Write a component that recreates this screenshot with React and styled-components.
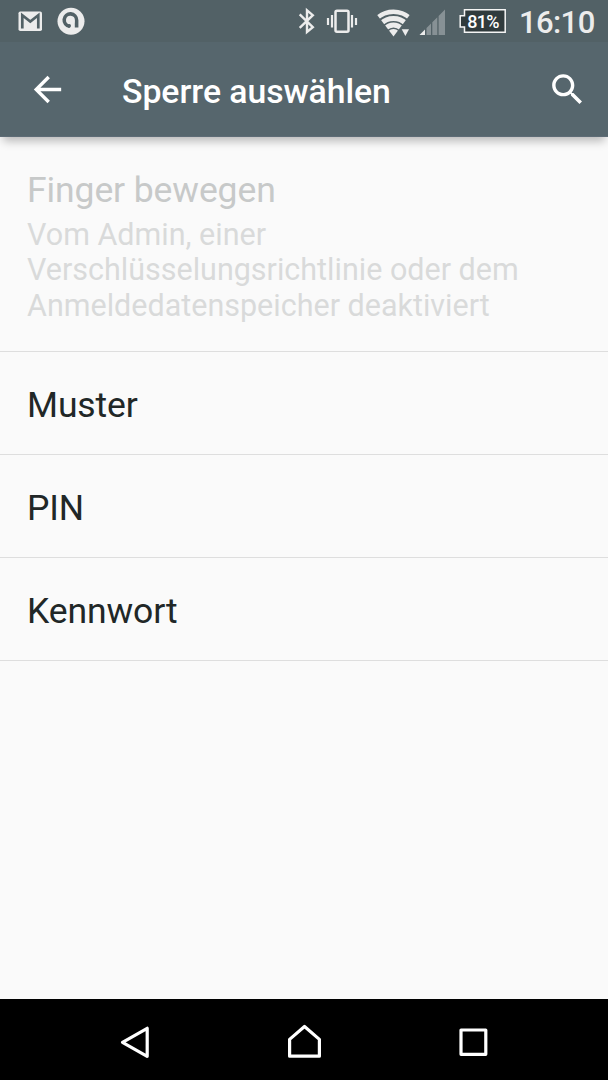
import React from 'react';
import styled, { createGlobalStyle } from 'styled-components';

const GlobalStyle = createGlobalStyle`
  * { box-sizing: border-box; }
  body { margin: 0; background: #fafafa; font-family: Roboto, sans-serif; }
`;

const Screen = styled.div`
  display: flex;
  flex-direction: column;
  width: 608px;
  height: 1080px;
  background: #fafafa;
  overflow: hidden;
`;

const StatusBar = styled.div`
  display: flex;
  flex: none;
  align-items: flex-start;
  justify-content: space-between;
  height: 42px;
  padding: 0 13px 0 18px;
  background: #526166;
`;

const IconGroup = styled.div`
  display: flex;
  align-items: flex-start;
`;

const StatusIcon = styled.svg`
  display: block;
  flex: none;
  height: 44px;
  margin-left: ${(p) => p.$gap || 0}px;
`;

const Battery = styled.div`
  position: relative;
  width: 47px;
  height: 44px;
  margin-left: 14px;
`;

const BatteryLevel = styled.span`
  position: absolute;
  left: 2px;
  top: 9px;
  width: 44px;
  text-align: center;
  font-size: 18px;
  font-weight: 500;
  line-height: 25px;
  letter-spacing: -0.7px;
  color: #fff;
`;

const Clock = styled.span`
  width: 76px;
  margin-left: 13px;
  padding-top: 1px;
  font-size: 31px;
  font-weight: 500;
  line-height: 44px;
  letter-spacing: -0.6px;
  color: #ececec;
  white-space: nowrap;
`;

const Toolbar = styled.header`
  display: flex;
  flex: none;
  align-items: center;
  height: 95px;
  padding: 2px 20px 0 27px;
  background: #56666d;
  border-bottom: 1px solid #5e6c76;
  box-shadow: 0 7px 9px -3px rgba(0, 0, 0, 0.27);
  z-index: 1;
`;

const IconButton = styled.button`
  display: flex;
  padding: 0;
  margin-bottom: 2px;
  border: 0;
  background: none;
  color: #fff;
`;

const Title = styled.h1`
  flex: 1;
  margin: 4px 0 0 54px;
  font-size: 33.8px;
  font-weight: 500;
  line-height: 44px;
  letter-spacing: -0.05px;
  color: #fff;
  white-space: nowrap;
`;

const List = styled.main`
  flex: 1;
`;

const Row = styled.div`
  display: flex;
  flex-direction: column;
  justify-content: center;
  height: ${(p) => p.$height || 103}px;
  padding: ${(p) => (p.$height ? 2 : 4)}px 27px 0;
  border-bottom: 1px solid #dedede;
`;

const RowTitle = styled.div`
  font-size: 35.5px;
  line-height: 46px;
  letter-spacing: -0.1px;
  color: ${(p) => (p.$disabled ? '#c7c9c9' : '#212727')};
`;

const RowSummary = styled.div`
  margin-top: 4px;
  font-size: 30.5px;
  line-height: 35.5px;
  color: #d9dada;
`;

const NavBar = styled.nav`
  display: flex;
  flex: none;
  justify-content: space-between;
  height: 81px;
  padding: 0 119px 0 119px;
  background: #000;
`;

const NavIcon = styled.svg`
  display: block;
  fill: none;
  stroke: #fff;
  stroke-width: 3.2;
  stroke-linejoin: round;
`;

export default function App() {
  return (
    <>
      <GlobalStyle />
      <Screen>
        <StatusBar>
          <IconGroup>
            <StatusIcon width="24" viewBox="18 0 24 44">
              <rect x="18.5" y="11.5" width="23.5" height="19.5" rx="1.8" fill="#ececec" />
              <path d="M22.3 28.5V15.2L30.3 21.6L38.3 15.2V28.5" fill="none" stroke="#526166" strokeWidth="2.7" />
            </StatusIcon>
            <StatusIcon width="28" $gap={15} viewBox="57 0 28 44">
              <circle cx="71" cy="21.2" r="13.5" fill="#ececec" />
              <path d="M69.5 26.2A6.2 6.2 0 1 1 76.6 20.2V27.5" fill="none" stroke="#526166" strokeWidth="3.6" />
              <circle cx="70.8" cy="21.1" r="3.8" fill="#ececec" />
              <path d="M69.2 27.9C66.8 27.3 67.1 23.9 69.4 24C71.3 24.2 71.7 27 69.2 27.9Z" fill="#526166" />
            </StatusIcon>
          </IconGroup>
          <IconGroup>
            <StatusIcon width="18" viewBox="298 0 18 44">
              <path d="M299.7 14.3L312.8 27.2L307 32V10.3L312.8 15.2L299.7 27.8" fill="none" stroke="#ececec" strokeWidth="2.4" />
            </StatusIcon>
            <StatusIcon width="32" $gap={10} viewBox="326 0 32 44">
              <rect x="335.5" y="10.7" width="13" height="21" rx="1.5" fill="none" stroke="#ececec" strokeWidth="2.5" />
              <path d="M332 15V27.5M328 18V25M352 15V27.5M356 18V25" stroke="#ececec" strokeWidth="2.2" />
            </StatusIcon>
            <StatusIcon width="34" $gap={19} viewBox="377 0 34 44">
              <defs>
                <clipPath id="fan"><path d="M393.5 36.5L373.5 10V4H413.5V10Z" /></clipPath>
              </defs>
              <g clipPath="url(#fan)" fill="none" stroke="#ececec">
                <circle cx="393.5" cy="36" r="24.2" strokeWidth="4.6" />
                <circle cx="393.5" cy="36" r="17.6" strokeWidth="5" />
                <circle cx="393.5" cy="36" r="11" strokeWidth="4.8" />
                <circle cx="393.5" cy="36" r="3.5" strokeWidth="7" />
              </g>
              <path d="M401.7 29.2H409L405.4 36Z" fill="#ececec" />
            </StatusIcon>
            <StatusIcon width="26" $gap={8} viewBox="419 0 26 44">
              <path d="M426.5 35V28L431 23.5V35ZM432.3 35V22.2L437.3 17.2V35ZM438.6 35V16L445 9.5V35Z" fill="#879195" />
              <path d="M419.5 35L425 29.5V35Z" fill="#ececec" />
            </StatusIcon>
            <Battery>
              <StatusIcon width="47" viewBox="459 0 47 44">
                <path d="M464.5 9.8H505.2V32.2H464.5V27H460.2V15.7H464.5Z" fill="#303b3d" stroke="#f5f5f5" strokeWidth="1.5" />
              </StatusIcon>
              <BatteryLevel>81%</BatteryLevel>
            </Battery>
            <Clock>16:10</Clock>
          </IconGroup>
        </StatusBar>
        <Toolbar>
          <IconButton aria-label="Zurück">
            <svg width="41" height="41" viewBox="0 0 24 24" fill="currentColor">
              <path d="M20 11H7.83l5.59-5.59L12 4l-8 8 8 8 1.41-1.41L7.83 13H20v-2z" />
            </svg>
          </IconButton>
          <Title>Sperre auswählen</Title>
          <IconButton aria-label="Suchen">
            <svg width="41" height="41" viewBox="0 0 24 24" fill="currentColor">
              <path d="M15.5 14h-.79l-.28-.27C15.41 12.59 16 11.11 16 9.5 16 5.91 13.09 3 9.5 3S3 5.91 3 9.5 5.91 16 9.5 16c1.61 0 3.09-.59 4.23-1.57l.27.28v.79l5 4.99L20.49 19l-4.99-5zm-6 0C7.01 14 5 11.99 5 9.5S7.01 5 9.5 5 14 7.01 14 9.5 11.99 14 9.5 14z" />
            </svg>
          </IconButton>
        </Toolbar>
        <List>
          <Row $height={215}>
            <RowTitle $disabled>Finger bewegen</RowTitle>
            <RowSummary>
              Vom Admin, einer Verschlüsselungsrichtlinie oder dem Anmeldedatenspeicher deaktiviert
            </RowSummary>
          </Row>
          <Row><RowTitle>Muster</RowTitle></Row>
          <Row><RowTitle>PIN</RowTitle></Row>
          <Row><RowTitle>Kennwort</RowTitle></Row>
        </List>
        <NavBar>
          <NavIcon width="32" height="81" viewBox="119 999 32 81">
            <path d="M122.5 1042.3L147.2 1028.3V1056.3Z" />
          </NavIcon>
          <NavIcon width="36" height="81" viewBox="287 999 36 81">
            <path d="M289.6 1056.2V1039.4L304.5 1026.5L319.4 1039.4V1056.2Z" />
          </NavIcon>
          <NavIcon width="30" height="81" viewBox="459 999 30 81">
            <path d="M461 1030H485.8V1054.3H461Z" />
          </NavIcon>
        </NavBar>
      </Screen>
    </>
  );
}
